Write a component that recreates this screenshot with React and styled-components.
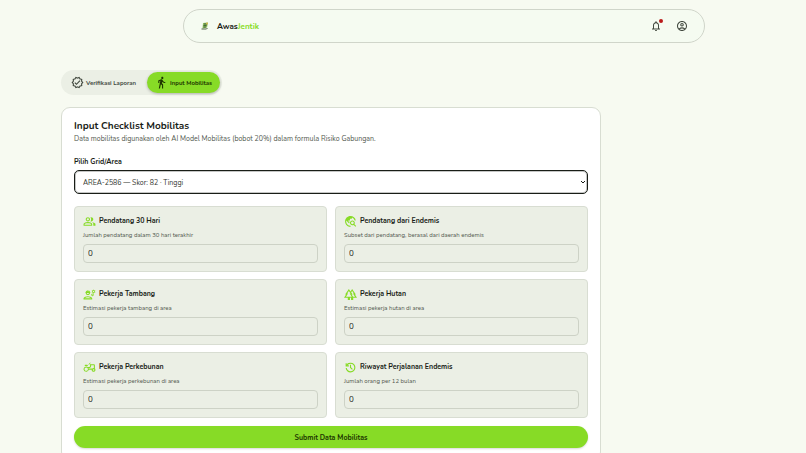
import React, { useState } from "react";
import styled, { createGlobalStyle } from "styled-components";
import {
  MdDirectionsWalk,
  MdOutlineAccountCircle,
  MdOutlineAgriculture,
  MdOutlineEngineering,
  MdOutlineForest,
  MdOutlineNotifications,
  MdOutlineVerified,
  MdTravelExplore,
} from "react-icons/md";

// Icons
const Symbol = ({ d }) => (
  <svg
    width="1em"
    height="1em"
    viewBox="0 -960 960 960"
    fill="currentColor"
    aria-hidden="true"
  >
    <path d={d} />
  </svg>
);

const GroupIcon = () => (
  <Symbol d="M40-160v-112q0-34 17.5-62.5T104-378q62-31 126-46.5T360-440q66 0 130 15.5T616-378q29 15 46.5 43.5T680-272v112H40Zm720 0v-120q0-44-24.5-84.5T666-434q51 6 96 20.5t84 35.5q36 20 55 44.5t19 53.5v120H760ZM360-480q-66 0-113-47t-47-113q0-66 47-113t113-47q66 0 113 47t47 113q0 66-47 113t-113 47Zm400-160q0 66-47 113t-113 47q-11 0-28-2.5t-28-5.5q27-32 41.5-71t14.5-81q0-42-14.5-81T544-792q14-5 28-6.5t28-1.5q66 0 113 47t47 113ZM120-240h480v-32q0-11-5.5-20T580-306q-54-27-109-40.5T360-360q-56 0-111 13.5T140-306q-9 5-14.5 14t-5.5 20v32Zm240-320q33 0 56.5-23.5T440-640q0-33-23.5-56.5T360-720q-33 0-56.5 23.5T280-640q0 33 23.5 56.5T360-560Z" />
);

const HistoryIcon = () => (
  <Symbol d="M480-120q-138 0-240.5-91.5T122-440h82q14 104 92.5 172T480-200q117 0 198.5-81.5T760-480q0-117-81.5-198.5T480-760q-69 0-129 32t-101 88h110v80H120v-240h80v94q51-64 124.5-99T480-840q75 0 140.5 28.5t114 77q48.5 48.5 77 114T840-480q0 75-28.5 140.5t-77 114q-48.5 48.5-114 77T480-120Zm112-192L440-464v-216h80v184l128 128-56 56Z" />
);

const fields = [
  {
    id: "pendatang",
    label: "Pendatang 30 Hari",
    hint: "Jumlah pendatang dalam 30 hari terakhir",
    icon: GroupIcon,
  },
  {
    id: "endemis",
    label: "Pendatang dari Endemis",
    hint: "Subset dari pendatang, berasal dari daerah endemis",
    icon: MdTravelExplore,
  },
  {
    id: "tambang",
    label: "Pekerja Tambang",
    hint: "Estimasi pekerja tambang di area",
    icon: MdOutlineEngineering,
  },
  {
    id: "hutan",
    label: "Pekerja Hutan",
    hint: "Estimasi pekerja hutan di area",
    icon: MdOutlineForest,
  },
  {
    id: "perkebunan",
    label: "Pekerja Perkebunan",
    hint: "Estimasi pekerja perkebunan di area",
    icon: MdOutlineAgriculture,
  },
  {
    id: "riwayat",
    label: "Riwayat Perjalanan Endemis",
    hint: "Jumlah orang per 12 bulan",
    icon: HistoryIcon,
  },
];

const Logo = () => (
  <svg width="8" height="8" viewBox="0 0 16 16" aria-hidden="true">
    <path d="M4 2 14 1 12 11 3 13Z" fill="#8dbb62" />
    <path d="M6 4h6M5 7h6M5 10h5" stroke="#456b37" strokeWidth="2" />
    <path d="M1 14h10l2-2" stroke="#53624a" strokeWidth="2" fill="none" />
    <circle cx="12" cy="3" r="2" fill="#d5b84a" />
  </svg>
);

const App = () => {
  const [tab, setTab] = useState("mobilitas");
  const [values, setValues] = useState({});

  const onChange = (id, value) => {
    setValues((values) => ({ ...values, [id]: value }));
  };

  return (
    <>
      <GlobalStyle />
      <Header>
        <NavBar>
          <Brand href="#">
            <Logo />
            <span>
              Awas<Accent>Jentik</Accent>
            </span>
          </Brand>
          <Actions>
            <IconButton aria-label="Notifikasi">
              <MdOutlineNotifications />
              <Dot />
            </IconButton>
            <IconButton aria-label="Akun">
              <MdOutlineAccountCircle />
            </IconButton>
          </Actions>
        </NavBar>
      </Header>
      <Main>
        <Tabs>
          <Tab $active={tab === "laporan"} onClick={() => setTab("laporan")}>
            <MdOutlineVerified />
            Verifikasi Laporan
          </Tab>
          <Tab $active={tab === "mobilitas"} onClick={() => setTab("mobilitas")}>
            <MdDirectionsWalk />
            Input Mobilitas
          </Tab>
        </Tabs>
        <Panel onSubmit={(e) => e.preventDefault()}>
          <Title>Input Checklist Mobilitas</Title>
          <Subtitle>
            Data mobilitas digunakan oleh AI Model Mobilitas (bobot 20%) dalam
            formula Risiko Gabungan.
          </Subtitle>
          <AreaLabel htmlFor="area">Pilih Grid/Area</AreaLabel>
          <SelectBox>
            <Select id="area">
              <option>AREA-2586 — Skor: 82 · Tinggi</option>
            </Select>
            <Chevron viewBox="0 0 6 4" aria-hidden="true">
              <path d="M1 1 3 3 5 1" />
            </Chevron>
          </SelectBox>
          <Fields>
            {fields.map(({ id, label, hint, icon: Icon }) => (
              <Field key={id}>
                <FieldLabel htmlFor={id}>
                  <Icon />
                  {label}
                </FieldLabel>
                <Hint id={`${id}-hint`}>{hint}</Hint>
                <Input
                  id={id}
                  inputMode="numeric"
                  aria-describedby={`${id}-hint`}
                  value={values[id] ?? "0"}
                  onChange={(e) => onChange(id, e.target.value)}
                />
              </Field>
            ))}
          </Fields>
          <Submit type="submit">Submit Data Mobilitas</Submit>
        </Panel>
      </Main>
    </>
  );
};

export default App;

const GlobalStyle = createGlobalStyle`
  * {
    box-sizing: border-box;
  }

  body {
    margin: 0;
    background: #f7faf1;
    color: #191d17;
    font-family: Nunito, Lato, "Open Sans", sans-serif;
  }

  button, input, select {
    font-family: inherit;
    color: inherit;
  }
`;

const Header = styled.header`
  padding: 9px 101px 0 183px;
`;

const NavBar = styled.nav`
  display: flex;
  align-items: center;
  justify-content: space-between;
  height: 34px;
  padding: 0 16px 0 17px;
  border: 1px solid #d0d5ca;
  border-radius: 17px;
  background: #f5fbf1;
`;

const Brand = styled.a`
  display: flex;
  align-items: center;
  gap: 8px;
  color: inherit;
  font-size: 8px;
  font-weight: 700;
  text-decoration: none;
`;

const Accent = styled.span`
  color: #87db26;
`;

const Actions = styled.div`
  display: flex;
  gap: 14px;
`;

const IconButton = styled.button`
  position: relative;
  display: flex;
  padding: 0;
  border: 0;
  background: none;
  color: #42493f;
  font-size: 12px;
`;

const Dot = styled.span`
  position: absolute;
  top: -1px;
  right: -1px;
  width: 4px;
  height: 4px;
  border-radius: 50%;
  background: #ba1a1a;
`;

const Main = styled.main`
  max-width: 662px;
  padding: 27px 61px 24px;
`;

const Tabs = styled.div`
  display: flex;
  gap: 3px;
  width: fit-content;
  padding: 2px;
  border-radius: 13px;
  background: #ebefe5;
`;

const Tab = styled.button`
  display: flex;
  align-items: center;
  gap: 2px;
  height: 21px;
  padding: 0 8px;
  border: 0;
  border-radius: 11px;
  background: ${({ $active }) => ($active ? "#87db26" : "transparent")};
  box-shadow: ${({ $active }) => ($active ? "0 1px 3px #00000040" : "none")};
  color: ${({ $active }) => ($active ? "#1d3500" : "#42493f")};
  font-size: 6px;
  font-weight: 700;

  svg {
    font-size: 13px;
  }
`;

const Panel = styled.form`
  margin-top: 12px;
  padding: 11px 12px 12px;
  border: 1px solid #d8ddd2;
  border-radius: 9px;
  background: #fff;
`;

const Title = styled.h1`
  margin: 0;
  font-size: 10px;
  font-weight: 700;
  line-height: 14px;
`;

const Subtitle = styled.p`
  margin: 0;
  color: #51574e;
  font-size: 7px;
  line-height: 12px;
`;

const AreaLabel = styled.label`
  display: block;
  margin: 12px 0 3px;
  font-size: 7px;
  font-weight: 700;
  line-height: 10px;
`;

const SelectBox = styled.div`
  position: relative;
`;

const Select = styled.select`
  display: block;
  width: 100%;
  height: 24px;
  padding: 0 8px;
  border: 1px solid #191d17;
  border-radius: 5px;
  background: #fff;
  box-shadow: inset 0 0 0 1px #191d1740;
  color: #32372f;
  font-size: 7px;
  appearance: none;
`;

const Chevron = styled.svg`
  position: absolute;
  top: 10px;
  right: 2px;
  width: 6px;
  height: 4px;
  fill: none;
  stroke: #191d17;
  pointer-events: none;
`;

const Fields = styled.div`
  display: grid;
  grid-template-columns: 1fr 1fr;
  gap: 7px 8px;
  margin: 12px 0 8px;
`;

const Field = styled.div`
  padding: 8px;
  border: 1px solid #d8ddd2;
  border-radius: 4px;
  background: #ebefe5;
`;

const FieldLabel = styled.label`
  display: flex;
  align-items: center;
  gap: 3px;
  height: 12px;
  font-size: 7px;
  font-weight: 700;
  line-height: 12px;

  svg {
    color: #87db26;
    font-size: 13px;
  }
`;

const Hint = styled.p`
  margin: 3px 0 4px;
  color: #51574e;
  font-size: 6px;
  line-height: 10px;
`;

const Input = styled.input`
  display: block;
  width: 100%;
  height: 19px;
  padding: 0 4px;
  border: 1px solid #cdd2c6;
  border-radius: 4px;
  background: transparent;
  font-size: 8px;
`;

const Submit = styled.button`
  display: block;
  width: 100%;
  height: 22px;
  border: 0;
  border-radius: 11px;
  background: #87db26;
  box-shadow: 0 1px 2px #00000026;
  color: #1d3500;
  font-size: 7px;
  font-weight: 700;
`;
